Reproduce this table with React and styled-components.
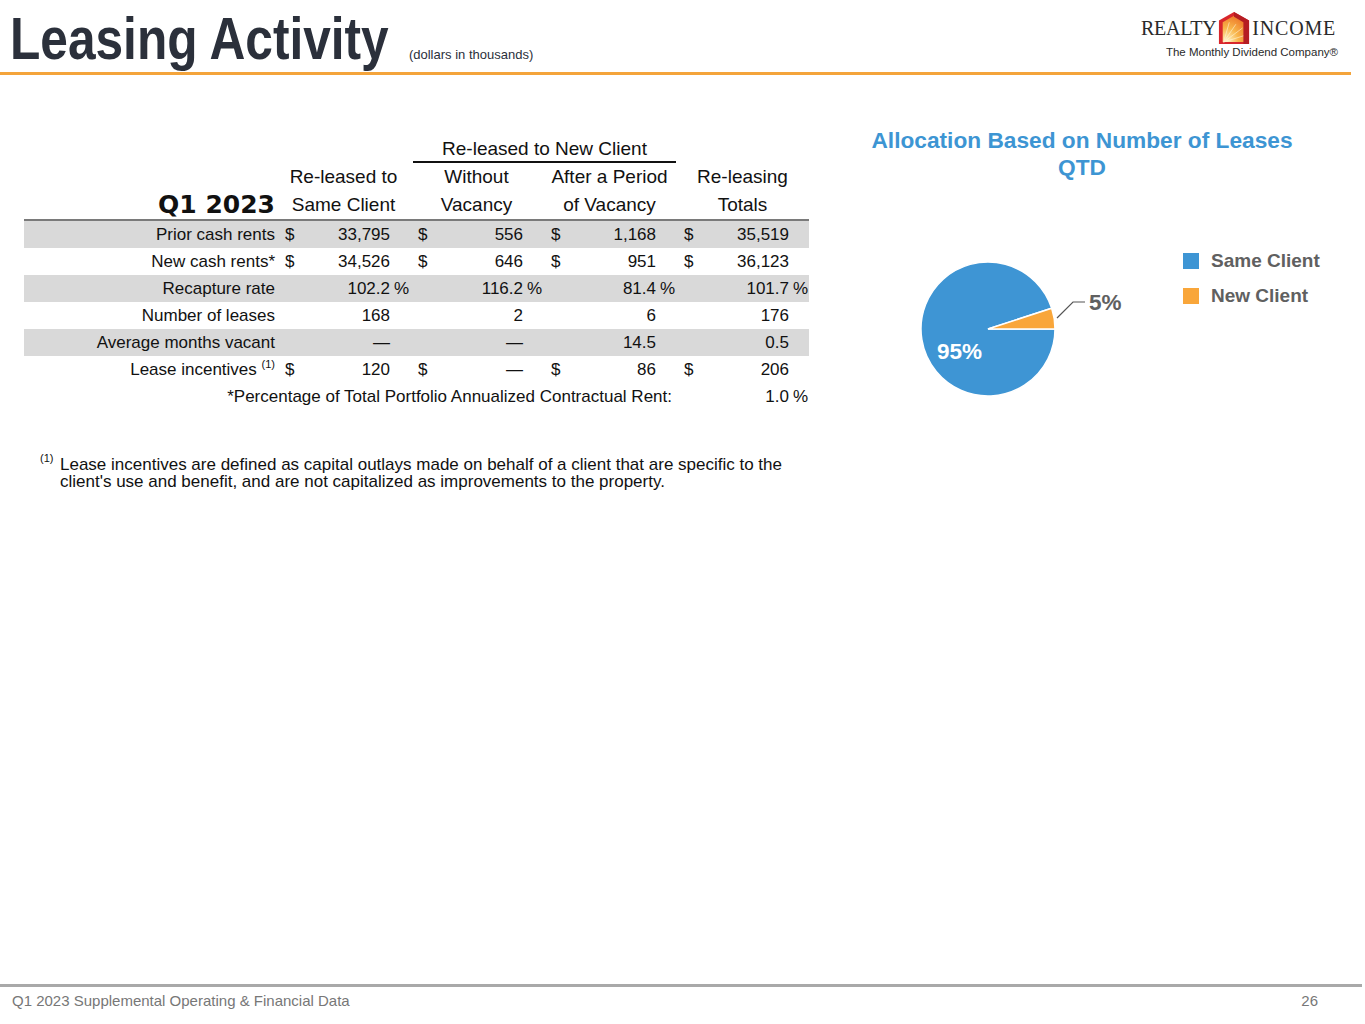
import React from "react";
import styled, { createGlobalStyle } from "styled-components";

const Global = createGlobalStyle`
  html, body { margin: 0; padding: 0; background: #fff; }
  body { font-family: "Liberation Sans", Arial, sans-serif; color: #111; }
`;

const Page = styled.div`
  width: 1365px;
  min-height: 1024px;
  display: flex;
  flex-direction: column;
  box-sizing: border-box;
`;

const Header = styled.header`
  height: 72px;
  display: flex;
  justify-content: space-between;
  align-items: flex-end;
  padding: 0 15px 0 10px;
  border-bottom: 3px solid #f4a43b;
  margin-right: 14px;
  box-sizing: content-box;
`;

const TitleGroup = styled.div`
  display: flex;
  align-items: baseline;
  gap: 20px;
  padding-bottom: 3px;
`;

const Title = styled.h1`
  margin: 0 -79px 0 0;
  font-family: "Liberation Sans", Arial, sans-serif;
  font-weight: 700;
  font-size: 60px;
  line-height: 60px;
  color: #2b303b;
  transform: scaleX(0.827);
  transform-origin: left center;
  white-space: nowrap;
`;

const Subtitle = styled.span`
  font-size: 13px;
  color: #2b303b;
`;

const Logo = styled.div`
  display: flex;
  flex-direction: column;
  align-items: flex-end;
  padding-bottom: 14px;
`;

const LogoTop = styled.div`
  display: flex;
  align-items: center;
  gap: 2px;
`;

const LogoWord = styled.span`
  font-family: "Liberation Serif", "Times New Roman", serif;
  font-size: 20px;
  letter-spacing: ${(p) => p.$ls || "0px"};
  color: #2a2a2a;
  line-height: 24px;
`;

const Tagline = styled.span`
  font-size: 11.5px;
  color: #2a2a2a;
  margin-right: -2px;
  white-space: nowrap;
`;

const Main = styled.main`
  display: flex;
  align-items: flex-start;
`;

const LeftCol = styled.section`
  padding: 60px 0 0 24px;
  width: 785px;
`;

const Grid = styled.div`
  display: grid;
  grid-template-columns: 253px repeat(4, 30px 83px 20px);
  font-size: 17px;
  color: #111;
`;

const HeadCell = styled.div`
  grid-column: ${(p) => p.$col} / span ${(p) => p.$span || 3};
  height: 28px;
  line-height: 28px;
  font-size: 19px;
  text-align: center;
  white-space: nowrap;
  ${(p) => p.$under && "border-bottom: 2px solid #111; height: 26px; margin: 0 0 0 3px;"}
`;

const QLabel = styled.div`
  grid-column: 1;
  height: 28px;
  line-height: 28px;
  text-align: right;
  padding-right: 2px;
  font-family: "DejaVu Sans", Verdana, sans-serif;
  font-weight: 700;
  font-size: 25px;
`;

const Rule = styled.div`
  grid-column: 1 / -1;
  height: 0;
  border-bottom: 2px solid #7a7a7a;
`;

const Row = styled.div`
  grid-column: 1 / -1;
  display: grid;
  grid-template-columns: subgrid;
  height: 27px;
  line-height: 27px;
  background: ${(p) => (p.$shade ? "#d9d9d9" : "transparent")};
`;

const Label = styled.div`
  text-align: right;
  padding-right: 2px;
  white-space: nowrap;
`;

const Cur = styled.div`
  padding-left: 8px;
`;

const Val = styled.div`
  text-align: right;
`;

const Pct = styled.div`
  padding-left: 4px;
  white-space: nowrap;
`;

const Sup = styled.sup`
  font-size: 11px;
  line-height: 0;
  vertical-align: 7px;
`;

const NoteLabel = styled.div`
  grid-column: 1 / span 10;
  text-align: right;
  padding-right: 4px;
  white-space: nowrap;
`;

const Footnote = styled.div`
  display: flex;
  margin: 46px 0 0 16px;
  font-size: 17px;
  line-height: 17px;
  color: #111;
`;

const FootSup = styled.span`
  width: 20px;
  flex: none;
  font-size: 11px;
  line-height: 11px;
  margin-top: -3px;
`;

const RightCol = styled.section`
  margin-left: 51px;
  width: 444px;
  padding-top: 52px;
`;

const ChartTitle = styled.h2`
  margin: 0;
  text-align: center;
  font-size: 22.7px;
  line-height: 27px;
  font-weight: 700;
  color: #3d95d3;
  white-space: nowrap;
`;

const ChartBody = styled.div`
  display: flex;
  align-items: flex-start;
  padding-left: 40px;
  margin-top: 69px;
`;

const PieSvg = styled.svg`
  flex: none;
  display: block;
`;

const Legend = styled.ul`
  list-style: none;
  flex: none;
  margin: 0 0 0 43px;
  padding: 0;
  display: flex;
  flex-direction: column;
  gap: 13px;
`;

const LegendItem = styled.li`
  display: flex;
  align-items: center;
  gap: 12px;
  height: 22px;
  font-size: 19px;
  font-weight: 700;
  color: #606060;
  white-space: nowrap;
`;

const Swatch = styled.span`
  width: 16px;
  height: 16px;
  flex: none;
  background: ${(p) => p.$color};
`;

const Footer = styled.footer`
  margin-top: auto;
  margin-right: 3px;
  border-top: 3px solid #a9a9a9;
  height: 40px;
  display: flex;
  justify-content: space-between;
  align-items: flex-start;
  padding: 5px 44px 0 12px;
  line-height: 18px;
  font-size: 15px;
  color: #777;
  box-sizing: border-box;
`;

const rows = [
  { label: "Prior cash rents", cur: true, vals: ["33,795", "556", "1,168", "35,519"] },
  { label: "New cash rents*", cur: true, vals: ["34,526", "646", "951", "36,123"] },
  { label: "Recapture rate", pct: true, vals: ["102.2", "116.2", "81.4", "101.7"] },
  { label: "Number of leases", vals: ["168", "2", "6", "176"] },
  { label: "Average months vacant", vals: ["—", "—", "14.5", "0.5"] },
  { label: "Lease incentives", sup: true, cur: true, vals: ["120", "—", "86", "206"] },
];

const BLUE = "#3e95d4";
const ORANGE = "#f9a63a";

function LogoIcon() {
  return (
    <svg width="32" height="36" viewBox="0 0 34 36">
      <defs>
        <radialGradient id="sun" cx="0.2" cy="0.95" r="1">
          <stop offset="0" stopColor="#fff3c4" />
          <stop offset="0.5" stopColor="#f8b54a" />
          <stop offset="1" stopColor="#ee7a2a" />
        </radialGradient>
      </defs>
      <polygon points="17,1 33,10 33,35 17,35 1,35 1,10" fill="#d8262c" />
      <polygon points="17,5 29,12 29,33 5,33 5,12" fill="url(#sun)" />
      <g stroke="#fff6d8" strokeWidth="0.8" opacity="0.8">
        <line x1="6" y1="33" x2="12" y2="12" />
        <line x1="6" y1="33" x2="19" y2="14" />
        <line x1="6" y1="33" x2="26" y2="18" />
        <line x1="6" y1="33" x2="28" y2="26" />
      </g>
      <polygon points="17,1 33,10 33,35 27,35 27,12 17,6" fill="#b51d23" />
    </svg>
  );
}

function Pie() {
  const cx = 88, cy = 79, r = 67;
  const a = (18 * Math.PI) / 180;
  const ex = cx + r * Math.cos(a);
  const ey = cy - r * Math.sin(a);
  return (
    <PieSvg width="240" height="160" viewBox="0 0 240 160">
      <path d={`M${cx},${cy} L${ex},${ey} A${r},${r} 0 1,0 ${cx + r},${cy} Z`} fill={BLUE} stroke="#fff" strokeWidth="1.5" />
      <path d={`M${cx},${cy} L${cx + r},${cy} A${r},${r} 0 0,0 ${ex},${ey} Z`} fill={ORANGE} stroke="#fff" strokeWidth="1.5" />
      <polyline points="157,68 173,52 185,52" fill="none" stroke="#555" strokeWidth="1.2" />
      <text x="189" y="60" fontFamily="Liberation Sans, Arial, sans-serif" fontWeight="700" fontSize="22.5" fill="#606060">5%</text>
      <text x="37" y="109" fontFamily="Liberation Sans, Arial, sans-serif" fontWeight="700" fontSize="22.5" fill="#fff">95%</text>
    </PieSvg>
  );
}

export default function App() {
  return (
    <Page>
      <Global />
      <Header>
        <TitleGroup>
          <Title>Leasing Activity</Title>
          <Subtitle>(dollars in thousands)</Subtitle>
        </TitleGroup>
        <Logo>
          <LogoTop>
            <LogoWord $ls="-0.3px">REALTY</LogoWord>
            <LogoIcon />
            <LogoWord $ls="0.8px">INCOME</LogoWord>
          </LogoTop>
          <Tagline>The Monthly Dividend Company®</Tagline>
        </Logo>
      </Header>
      <Main>
        <LeftCol>
          <Grid>
            <HeadCell $col={5} $span={6} $under>Re-leased to New Client</HeadCell>
            <HeadCell $col={2}>Re-leased to</HeadCell>
            <HeadCell $col={5}>Without</HeadCell>
            <HeadCell $col={8}>After a Period</HeadCell>
            <HeadCell $col={11}>Re-leasing</HeadCell>
            <QLabel>Q1 2023</QLabel>
            <HeadCell $col={2}>Same Client</HeadCell>
            <HeadCell $col={5}>Vacancy</HeadCell>
            <HeadCell $col={8}>of Vacancy</HeadCell>
            <HeadCell $col={11}>Totals</HeadCell>
            <Rule />
            {rows.map((r, i) => (
              <Row key={r.label} $shade={i % 2 === 0}>
                <Label>
                  {r.label}
                  {r.sup && <> <Sup>(1)</Sup></>}
                </Label>
                {r.vals.map((v, j) => (
                  <React.Fragment key={j}>
                    <Cur>{r.cur ? "$" : ""}</Cur>
                    <Val>{v}</Val>
                    <Pct>{r.pct ? "%" : ""}</Pct>
                  </React.Fragment>
                ))}
              </Row>
            ))}
            <Row>
              <NoteLabel>*Percentage of Total Portfolio Annualized Contractual Rent:</NoteLabel>
              <Cur />
              <Val>1.0</Val>
              <Pct>%</Pct>
            </Row>
          </Grid>
          <Footnote>
            <FootSup>(1)</FootSup>
            <span>
              Lease incentives are defined as capital outlays made on behalf of a client that are specific to the
              <br />
              client's use and benefit, and are not capitalized as improvements to the property.
            </span>
          </Footnote>
        </LeftCol>
        <RightCol>
          <ChartTitle>
            Allocation Based on Number of Leases
            <br />
            QTD
          </ChartTitle>
          <ChartBody>
            <Pie />
            <Legend>
              <LegendItem>
                <Swatch $color={BLUE} />
                Same Client
              </LegendItem>
              <LegendItem>
                <Swatch $color={ORANGE} />
                New Client
              </LegendItem>
            </Legend>
          </ChartBody>
        </RightCol>
      </Main>
      <Footer>
        <span>Q1 2023 Supplemental Operating &amp; Financial Data</span>
        <span>26</span>
      </Footer>
    </Page>
  );
}
